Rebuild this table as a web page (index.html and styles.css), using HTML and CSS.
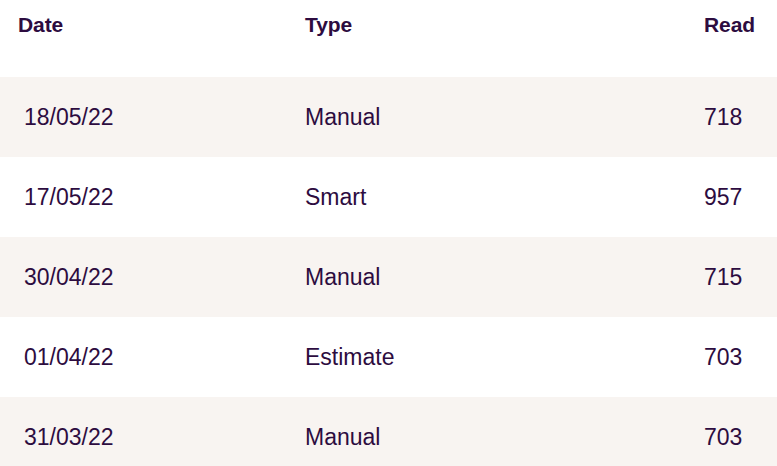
FILE: index.html
```html
<!DOCTYPE html>
<html>
<head>
<meta charset="utf-8">
<link rel="stylesheet" href="styles.css">
</head>
<body>
<div class="table">
  <div class="row head">
    <div class="cell c1">Date</div>
    <div class="cell c2">Type</div>
    <div class="cell c3">Read</div>
  </div>
  <div class="row alt">
    <div class="cell c1">18/05/22</div>
    <div class="cell c2">Manual</div>
    <div class="cell c3">718</div>
  </div>
  <div class="row">
    <div class="cell c1">17/05/22</div>
    <div class="cell c2">Smart</div>
    <div class="cell c3">957</div>
  </div>
  <div class="row alt">
    <div class="cell c1">30/04/22</div>
    <div class="cell c2">Manual</div>
    <div class="cell c3">715</div>
  </div>
  <div class="row">
    <div class="cell c1">01/04/22</div>
    <div class="cell c2">Estimate</div>
    <div class="cell c3">703</div>
  </div>
  <div class="row alt">
    <div class="cell c1">31/03/22</div>
    <div class="cell c2">Manual</div>
    <div class="cell c3">703</div>
  </div>
</div>
</body>
</html>
```
FILE: styles.css
```css
html, body {
  margin: 0;
  padding: 0;
  background: #ffffff;
}
body {
  font-family: "Liberation Sans", Arial, sans-serif;
  color: #2d0c40;
  overflow: hidden;
}
.table {
  width: 777px;
  display: flex;
  flex-direction: column;
}
.row {
  display: grid;
  grid-template-columns: 305px 399px 73px;
  height: 80px;
  align-items: center;
  font-size: 23px;
}
.row.alt {
  background: #f8f4f1;
}
.row.head {
  height: 77px;
  align-items: start;
  font-size: 21px;
  font-weight: bold;
  letter-spacing: -0.1px;
}
.head .cell {
  padding-top: 13px;
}
.c1 {
  padding-left: 24px;
}
.head .c1 {
  padding-left: 18px;
}
```
